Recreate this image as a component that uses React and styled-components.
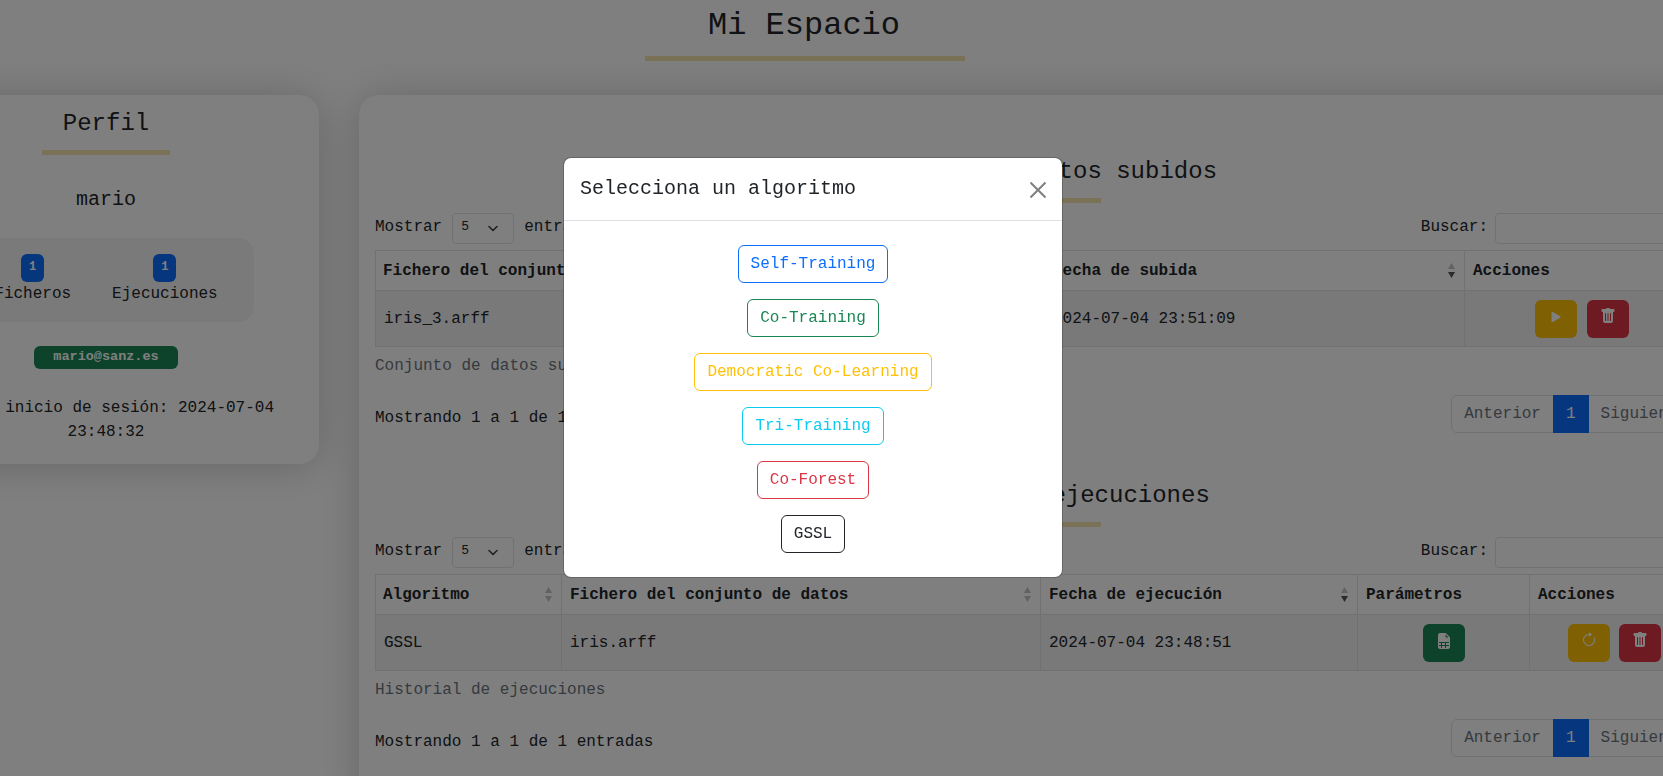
import React from 'react';
import styled, { createGlobalStyle } from 'styled-components';
import { BsPlayFill, BsTrashFill, BsFileEarmarkSpreadsheetFill, BsArrowClockwise } from 'react-icons/bs';

const Global = createGlobalStyle`
  html, body { margin: 0; padding: 0; height: 100%; overflow: hidden; background: #fff; }
  body { font-family: "Liberation Mono", monospace; font-size: 16px; line-height: 1.5; color: #212529; }
  * { box-sizing: border-box; }
`;

const Page = styled.div`
  width: 1824px;
  margin-left: -107px;
  height: 776px;
`;
const TitleBlock = styled.header`
  height: 95px;
  padding-top: 2px;
  display: flex;
  flex-direction: column;
  align-items: center;
`;
const Title = styled.h1`
  margin: 0 2px 0 0;
  font-size: 32px;
  font-weight: 400;
  line-height: 48px;
`;
const Rule = styled.div`
  width: ${p => p.$w}px;
  height: 5px;
  background: #f4e4ae;
  margin: ${p => p.$m};
`;
const Columns = styled.div`
  display: flex;
  gap: 40px;
  align-items: flex-start;
`;
const Card = styled.section`
  background: #fff;
  border-radius: 20px;
  box-shadow: 0 2px 40px rgba(0,0,0,.2);
`;
const ProfileCard = styled(Card)`
  width: 426px;
  height: 369px;
  padding-top: 14px;
  display: flex;
  flex-direction: column;
  align-items: center;
`;
const CardTitle = styled.h2`
  margin: 0;
  font-size: 24px;
  font-weight: 400;
  line-height: 29px;
`;
const UserName = styled.div`
  font-size: 20px;
  line-height: 30px;
  margin-top: 30px;
`;
const Stats = styled.div`
  width: 296px;
  height: 84px;
  margin-top: 23px;
  background: #f5f5f5;
  border-radius: 15px;
  display: flex;
  justify-content: center;
  gap: 41px;
  padding-top: 16px;
`;
const Stat = styled.div`
  display: flex;
  flex-direction: column;
  align-items: center;
`;
const CountBadge = styled.span`
  width: 23px;
  height: 28px;
  border-radius: 6px;
  background: #0d6efd;
  color: #fff;
  font-size: 12px;
  font-weight: 700;
  line-height: 27px;
  text-align: center;
`;
const StatLabel = styled.span`
  line-height: 24px;
`;
const Email = styled.span`
  margin-top: 24px;
  width: 144px;
  height: 23px;
  border-radius: 6px;
  background: #198754;
  color: #fff;
  font-size: 13.5px;
  font-weight: 700;
  line-height: 21px;
  text-align: center;
`;
const Session = styled.p`
  margin: 27px 0 0;
  width: 394px;
  text-align: center;
  line-height: 24px;
`;
const MainCard = styled(Card)`
  width: 1356px;
  padding: 62px 15px 0 16px;
`;
const Section = styled.div`
  height: 324px;
  display: flex;
  flex-direction: column;
`;
const SectionHead = styled.div`
  display: flex;
  flex-direction: column;
  align-items: center;
  margin-right: 1px;
`;
const Toolbar = styled.div`
  display: flex;
  justify-content: space-between;
  align-items: flex-start;
  height: 31px;
  margin-top: 10px;
`;
const Field = styled.label`
  display: flex;
  align-items: flex-start;
  line-height: 28px;
  gap: ${p => p.$gap}px;
`;
const Select = styled.div`
  width: 62px;
  height: 31px;
  border: 1px solid #dee2e6;
  border-radius: 4px;
  font-family: "Liberation Mono", monospace;
  font-size: 13px;
  line-height: 25px;
  padding-left: 8px;
  position: relative;
  svg { position: absolute; right: 15px; top: 11px; }
`;
const Search = styled.div`
  width: 205px;
  height: 31px;
  border: 1px solid #dee2e6;
  border-radius: 4px;
`;
const Table = styled.div`
  margin-top: 6px;
  border: 1px solid #dee2e6;
  display: grid;
  grid-template-columns: ${p => p.$cols};
`;
const Th = styled.div`
  height: 40px;
  padding: 0 8px;
  font-weight: 700;
  line-height: 40px;
  border-bottom: 1px solid #dee2e6;
  position: relative;
  white-space: nowrap;
  &:first-child { padding-left: 7px; }
  & + & { border-left: 1px solid #dee2e6; }
`;
const Td = styled.div`
  height: 55px;
  padding: 0 8px;
  display: flex;
  align-items: center;
  gap: ${p => p.$gap || 10}px;
  justify-content: ${p => (p.$center ? 'center' : 'flex-start')};
  background: #f2f2f2;
  white-space: nowrap;
  & + & { border-left: 1px solid #dee2e6; }
`;
const SortMark = styled.svg`
  position: absolute;
  right: 9px;
  top: 12px;
`;
const ActionButton = styled.span`
  width: 42px;
  height: 38px;
  border-radius: 6px;
  background: ${p => p.$bg};
  color: #fff;
  display: flex;
  align-items: center;
  justify-content: center;
  padding-bottom: ${p => p.$lift || 5}px;
`;
const Caption = styled.div`
  color: #6c757d;
  margin-top: 7px;
`;
const Footer = styled.div`
  display: flex;
  justify-content: space-between;
  margin-top: 17px;
`;
const Showing = styled.div`
  line-height: 38px;
  margin-top: 4px;
`;
const Pager = styled.div`
  display: flex;
  height: 38px;
  border: 1px solid #dee2e6;
  border-radius: 6px;
  color: #6c757d;
  line-height: 36px;
`;
const PageCell = styled.span`
  padding: 0 12px;
  ${p => p.$active && 'padding:0 13px;background:#0d6efd;color:#fff;margin:-1px 0;line-height:38px;'}
`;
const Overlay = styled.div`
  position: fixed;
  inset: 0;
  background: rgba(0,0,0,.5);
  display: flex;
  justify-content: center;
  align-items: flex-start;
  padding: 157px 37px 0 0;
`;
const Modal = styled.div`
  width: 500px;
  background: #fff;
  border: 1px solid rgba(0,0,0,.2);
  border-radius: 8px;
  background-clip: padding-box;
`;
const ModalHead = styled.div`
  height: 63px;
  padding: 0 16px 1px;
  display: flex;
  align-items: center;
  justify-content: space-between;
  border-bottom: 1px solid #dee2e6;
  font-size: 20px;
`;
const Close = styled.svg`
  margin-top: 3px;
`;
const ModalBody = styled.div`
  padding: 16px;
  display: flex;
  flex-direction: column;
  align-items: center;
`;
const AlgoButton = styled.span`
  height: 38px;
  margin: 8px 0;
  padding: 0 12px;
  border: 1px solid ${p => p.$c};
  border-radius: 6px;
  color: ${p => p.$c};
  line-height: 36px;
`;

const Sort = ({ active }) => (
  <SortMark width="7" height="15" viewBox="0 0 7 15">
    <path d="M3.5 0L7 6H0z" fill="#c4c4c4" />
    <path d="M3.5 15L7 9H0z" fill={active ? '#555' : '#c4c4c4'} />
  </SortMark>
);
const Chevron = () => (
  <svg width="10" height="7" viewBox="0 0 10 7" fill="none" stroke="#343a40" strokeWidth="1.5" strokeLinecap="round" strokeLinejoin="round">
    <path d="M1 1.5l4 4 4-4" />
  </svg>
);

const Controls = () => (
  <Toolbar>
    <Field $gap={10}>Mostrar <Select>5<Chevron /></Select> entradas</Field>
    <Field $gap={7}>Buscar: <Search /></Field>
  </Toolbar>
);
const Pagination = () => (
  <Pager>
    <PageCell>Anterior</PageCell>
    <PageCell $active>1</PageCell>
    <PageCell>Siguiente</PageCell>
  </Pager>
);

const algorithms = [
  ['Self-Training', '#0d6efd'],
  ['Co-Training', '#198754'],
  ['Democratic Co-Learning', '#ffc107'],
  ['Tri-Training', '#0dcaf0'],
  ['Co-Forest', '#dc3545'],
  ['GSSL', '#212529'],
];

export default function App() {
  return (
    <>
      <Global />
      <Page>
        <TitleBlock>
          <Title>Mi Espacio</Title>
          <Rule $w={320} $m="6px 0 0" />
        </TitleBlock>
        <Columns>
          <ProfileCard>
            <CardTitle>Perfil</CardTitle>
            <Rule $w={128} $m="12px 0 0" />
            <UserName>mario</UserName>
            <Stats>
              <Stat><CountBadge>1</CountBadge><StatLabel>Ficheros</StatLabel></Stat>
              <Stat><CountBadge>1</CountBadge><StatLabel>Ejecuciones</StatLabel></Stat>
            </Stats>
            <Email>mario@sanz.es</Email>
            <Session>Último inicio de sesión: 2024-07-04 23:48:32</Session>
          </ProfileCard>
          <MainCard>
            <Section>
              <SectionHead>
                <CardTitle>Conjunto de datos subidos</CardTitle>
                <Rule $w={128} $m="12px 0 0" />
              </SectionHead>
              <Controls />
              <Table $cols="668px 420px 1fr">
                <Th>Fichero del conjunto de datos<Sort /></Th>
                <Th>Fecha de subida<Sort active /></Th>
                <Th>Acciones</Th>
                <Td>iris_3.arff</Td>
                <Td>2024-07-04 23:51:09</Td>
                <Td $center>
                  <ActionButton $bg="#ffc107" $lift={4}><BsPlayFill size={18} /></ActionButton>
                  <ActionButton $bg="#dc3545"><BsTrashFill size={16} /></ActionButton>
                </Td>
              </Table>
              <Caption>Conjunto de datos subidos</Caption>
              <Footer>
                <Showing>Mostrando 1 a 1 de 1 entradas</Showing>
                <Pagination />
              </Footer>
            </Section>
            <Section>
              <SectionHead>
                <CardTitle>Historial de ejecuciones</CardTitle>
                <Rule $w={128} $m="12px 0 0" />
              </SectionHead>
              <Controls />
              <Table $cols="185px 479px 317px 172px 1fr">
                <Th>Algoritmo<Sort /></Th>
                <Th>Fichero del conjunto de datos<Sort /></Th>
                <Th>Fecha de ejecución<Sort active /></Th>
                <Th>Parámetros</Th>
                <Th>Acciones</Th>
                <Td>GSSL</Td>
                <Td>iris.arff</Td>
                <Td>2024-07-04 23:48:51</Td>
                <Td $center><ActionButton $bg="#198754" $lift={4}><BsFileEarmarkSpreadsheetFill size={16} /></ActionButton></Td>
                <Td $center $gap={9}>
                  <ActionButton $bg="#ffc107"><BsArrowClockwise size={16} /></ActionButton>
                  <ActionButton $bg="#dc3545"><BsTrashFill size={16} /></ActionButton>
                </Td>
              </Table>
              <Caption>Historial de ejecuciones</Caption>
              <Footer>
                <Showing>Mostrando 1 a 1 de 1 entradas</Showing>
                <Pagination />
              </Footer>
            </Section>
          </MainCard>
        </Columns>
      </Page>
      <Overlay>
        <Modal>
          <ModalHead>
            Selecciona un algoritmo
            <Close width="16" height="16" viewBox="0 0 16 16" fill="none" stroke="#7f7f7f" strokeWidth="2">
              <path d="M.5.5l15 15M15.5.5l-15 15" />
            </Close>
          </ModalHead>
          <ModalBody>
            {algorithms.map(([name, color]) => (
              <AlgoButton key={name} $c={color}>{name}</AlgoButton>
            ))}
          </ModalBody>
        </Modal>
      </Overlay>
    </>
  );
}
